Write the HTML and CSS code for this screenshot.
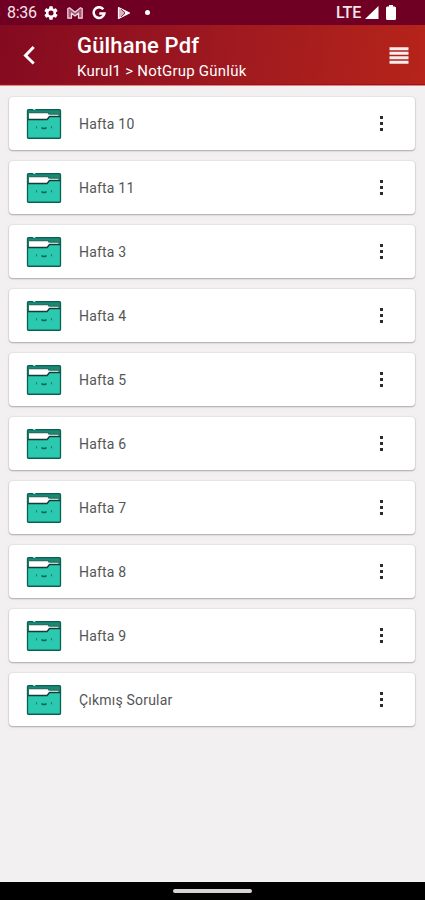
FILE: index.html
```
<!DOCTYPE html>
<html lang="tr">
<head>
<meta charset="utf-8">
<title>Gülhane Pdf</title>
<link rel="stylesheet" href="styles.css">
</head>
<body>
<svg class="defs" width="0" height="0">
  <symbol id="folder" viewBox="0 0 36 32">
    <rect x="1" y="1.600" width="34" height="28.800" rx="1.500" fill="#168a76"/>
    <path d="M3 5h19v1.500h10.500V9H22v2.500H3z" fill="#fff"/>
    <path d="M2 11.800h19l2.500-3.300h11V29.500H2z" fill="#2ac9b0"/>
    <path d="M2 11.600h19l2.500-3.100h11" fill="none" stroke="#173d35" stroke-width="1.500"/>
    <path d="M3 4.800h19.500l1.500 1.400h9.500" fill="none" stroke="#315c54" stroke-width=".8"/>
    <path d="M2.500 1.700h31q1 0 1 1v26.600q0 1-1 1h-31q-1 0-1-1V2.700q0-1 1-1z" fill="none" stroke="#0d5f50" stroke-width="1.300"/>
    <path d="M10.500 18.300v2.200M25.500 18.300v2" stroke="#168574" stroke-width="1.200"/>
    <path d="M15.500 19.600q2.500 2 5 0" fill="none" stroke="#125f53" stroke-width="1.500"/>
    <path d="M7 1h2.500" stroke="#e9fffb" stroke-width="1.400"/>
  </symbol>
</svg>
<div class="status">
  <span class="time">8:36</span>
  <svg class="gear" width="16" height="16" viewBox="0 0 24 24"><path fill-rule="evenodd" d="M19.430 12.980a7.800 7.800 0 0 0 0-1.960l2.110-1.650a.5.5 0 0 0 .12-.64l-2-3.460a.5.5 0 0 0-.61-.22l-2.490 1a7.300 7.300 0 0 0-1.690-.98l-.38-2.650A.5.5 0 0 0 14 2h-4a.5.5 0 0 0-.49.42l-.38 2.650c-.61.25-1.170.58-1.690.98l-2.490-1a.5.5 0 0 0-.61.22l-2 3.460a.5.5 0 0 0 .12.64l2.110 1.650a7.800 7.800 0 0 0 0 1.960l-2.110 1.650a.5.5 0 0 0-.12.640l2 3.460c.12.220.39.300.61.220l2.490-1c.52.400 1.080.730 1.690.980l.38 2.650c.03.240.24.420.49.420h4c.25 0 .46-.180.490-.420l.38-2.650c.61-.250 1.170-.590 1.690-.980l2.490 1c.23.090.49 0 .61-.220l2-3.460a.5.5 0 0 0-.12-.640zM12 15.800a3.800 3.800 0 1 1 0-7.600 3.800 3.800 0 0 1 0 7.600z"/></svg>
  <svg class="mail" width="16" height="12" viewBox="0 0 16 12"><path d="M.8 11.200V1.500L2.500.8 8 5.200 13.500.8l1.700.7v9.700h-3.700V6.200L8 9 4.500 6.200v5z" fill="#a8587a" stroke="#f2dce3" stroke-width="1.200" stroke-linejoin="round"/></svg>
  <svg class="google" width="14" height="14" viewBox="0 0 14 14"><path d="M11.300 3.200A5.400 5.400 0 1 0 12.400 7.600H7.300" fill="none" stroke="#fff" stroke-width="2.500"/></svg>
  <svg class="play" width="14" height="14" viewBox="0 0 14 14"><path d="M1.500 1.500 12.500 7l-11 5.500z" fill="#d9aebb" stroke="#fff" stroke-width="1.200" stroke-linejoin="round"/><path d="m4 3 5 5M4 11l5-5" stroke="#75143c" stroke-width=".8"/><path d="m8 5 4.500 2L8 9z" fill="#fff"/></svg>
  <span class="dot"></span>
  <span class="lte">LTE</span>
  <svg class="signal" width="14" height="13" viewBox="0 0 14 13"><path d="M13.500 0v13H0z"/></svg>
  <svg class="battery" width="10" height="15" viewBox="0 0 10 15"><path d="M3 0h4v1.500h1.500Q10 1.500 10 3v10.500Q10 15 8.500 15h-7Q0 15 0 13.500V3q0-1.500 1.500-1.500H3z"/></svg>
</div>
<header class="bar">
  <svg class="back" width="14" height="20" viewBox="0 0 14 20"><path d="M12.700 2 4.500 10.500l8.200 8" fill="none" stroke="#fff" stroke-width="3"/></svg>
  <div class="titles">
    <h1>Gülhane Pdf</h1>
    <p>Kurul1 &gt; NotGrup Günlük</p>
  </div>
  <svg class="menu" width="20" height="17" viewBox="0 0 20 17"><path d="M.5 1.800h19M.5 6.300h19M.5 10.800h19M.5 15.300h19" stroke="#fff" stroke-width="3"/></svg>
</header>
<main class="list">
  <div class="card"><svg class="folder"><use href="#folder"/></svg><span class="name">Hafta 10</span><span class="more"><i></i><i></i><i></i></span></div>
  <div class="card"><svg class="folder"><use href="#folder"/></svg><span class="name">Hafta 11</span><span class="more"><i></i><i></i><i></i></span></div>
  <div class="card"><svg class="folder"><use href="#folder"/></svg><span class="name">Hafta 3</span><span class="more"><i></i><i></i><i></i></span></div>
  <div class="card"><svg class="folder"><use href="#folder"/></svg><span class="name">Hafta 4</span><span class="more"><i></i><i></i><i></i></span></div>
  <div class="card"><svg class="folder"><use href="#folder"/></svg><span class="name">Hafta 5</span><span class="more"><i></i><i></i><i></i></span></div>
  <div class="card"><svg class="folder"><use href="#folder"/></svg><span class="name">Hafta 6</span><span class="more"><i></i><i></i><i></i></span></div>
  <div class="card"><svg class="folder"><use href="#folder"/></svg><span class="name">Hafta 7</span><span class="more"><i></i><i></i><i></i></span></div>
  <div class="card"><svg class="folder"><use href="#folder"/></svg><span class="name">Hafta 8</span><span class="more"><i></i><i></i><i></i></span></div>
  <div class="card"><svg class="folder"><use href="#folder"/></svg><span class="name">Hafta 9</span><span class="more"><i></i><i></i><i></i></span></div>
  <div class="card"><svg class="folder"><use href="#folder"/></svg><span class="name">Çıkmış Sorular</span><span class="more"><i></i><i></i><i></i></span></div>
</main>
<footer class="nav"><span class="pill"></span></footer>
</body>
</html>
```
FILE: styles.css
```
* { box-sizing: border-box; margin: 0; padding: 0; }
body {
  display: flex;
  flex-direction: column;
  height: 900px;
  overflow: hidden;
  background: #f2f0f1;
  font-family: Roboto, sans-serif;
}
svg { display: block; flex: none; }
.defs { position: absolute; }
.status {
  display: flex;
  align-items: center;
  flex: none;
  height: 25px;
  padding: 0 29px 0 7px;
  background: #6f0024;
  color: #f6e4e9;
  fill: #fff;
  font-size: 16px;
  line-height: 25px;
}
.time { width: 30px; letter-spacing: -0.3px; white-space: nowrap; }
.gear { margin-left: 6px; }
.mail { margin-left: 8px; }
.google { margin-left: 9px; }
.play { margin-left: 11px; }
.dot { width: 5px; height: 5px; margin-left: 14px; border-radius: 50%; background: #fff; }
.lte { margin-left: auto; font-weight: 500; font-size: 16px; letter-spacing: -0.2px; }
.signal { margin-left: 4px; }
.battery { margin-left: 7px; }
.bar {
  display: flex;
  flex: none;
  height: 60px;
  padding-left: 21px;
  padding-right: 16px;
  background: linear-gradient(100deg, #840a20 0%, #9c1820 48%, #b6241a 100%);
  border-bottom: 1px solid #9e1119;
  box-shadow: 0 1px 0 #dc8587;
  color: #fff;
}
.back { margin-top: 20px; }
.titles { flex: 1; padding: 8px 0 0 42px; }
h1 { font-size: 22px; line-height: 26px; font-weight: 500; letter-spacing: .15px; }
p { font-size: 15px; line-height: 18px; margin-top: 3px; letter-spacing: .22px; }
.menu { margin-top: 22px; opacity: .92; }
.list {
  display: flex;
  flex: 1;
  flex-direction: column;
  gap: 11px;
  padding: 12px 10px 0 9px;
}
.card {
  display: flex;
  align-items: center;
  flex: none;
  height: 53px;
  padding: 0 32px 0 17px;
  border-radius: 4px;
  background: #fff;
  box-shadow: 0 1px 2px rgba(0, 0, 0, .28), 0 0 2px rgba(0, 0, 0, .14);
}
.folder { width: 36px; height: 32px; }
.name { flex: 1; margin-left: 17px; color: #555; font-size: 14px; letter-spacing: .2px; }
.more { display: grid; gap: 3px; }
.more i { width: 3px; height: 3px; background: #2b2b2b; }
.nav {
  display: flex;
  align-items: center;
  justify-content: center;
  flex: none;
  height: 18px;
  background: #000;
}
.pill { width: 79px; height: 4px; border-radius: 2px; background: #d8d4d6; }
```
